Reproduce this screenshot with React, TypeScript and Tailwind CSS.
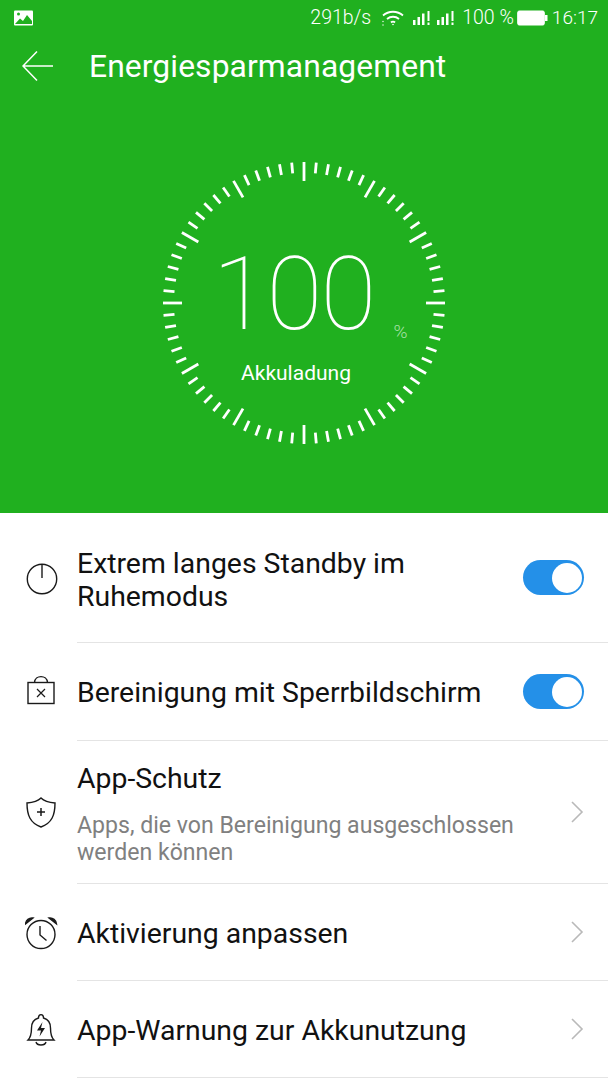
import React from "react";

const font = { fontFamily: "Roboto, sans-serif" };

function Gauge() {
  const ticks = Array.from({ length: 72 }, (_, i) => i);
  return (
    <svg width="310" height="310" viewBox="-155 -155 310 310" className="absolute inset-0">
      {ticks.map((i) => {
        const major = i % 6 === 0;
        return (
          <line
            key={i}
            x1="0"
            y1={-141}
            x2="0"
            y2={major ? -122 : -130}
            stroke="#fff"
            strokeWidth={2.8}
            transform={`rotate(${i * 5})`}
          />
        );
      })}
    </svg>
  );
}

function Signal() {
  return (
    <svg width="20" height="16" viewBox="0 0 20 16" fill="#fff">
      <rect x="0" y="10" width="2.500" height="5" />
      <rect x="4.500" y="7" width="2.500" height="8" />
      <rect x="9" y="3.500" width="2.500" height="11.500" />
      <rect x="14.500" y="1" width="2" height="10" />
      <rect x="14.500" y="12.500" width="2" height="2.500" />
    </svg>
  );
}

function Toggle() {
  return (
    <div className="w-[61px] h-[35px] rounded-full bg-[#2490e8] flex items-center justify-end pr-[2px] shrink-0">
      <div className="w-[30px] h-[30px] rounded-full bg-white" />
    </div>
  );
}

function Chevron() {
  return (
    <svg width="14" height="24" viewBox="0 0 14 24" fill="none" stroke="#b9b9b9" strokeWidth="1.6" className="shrink-0">
      <path d="M2 2 L12 12 L2 22" />
    </svg>
  );
}

const iconStroke = { fill: "none", stroke: "#1a1a1a", strokeWidth: 1.4 };

const PowerIcon = () => (
  <svg width="34" height="34" viewBox="0 0 34 34" {...iconStroke}>
    <circle cx="17" cy="18" r="14.7" />
    <path d="M17 3 V17" />
  </svg>
);
const BagIcon = () => (
  <svg width="34" height="34" viewBox="0 0 34 34" {...iconStroke}>
    <rect x="3" y="7.5" width="26" height="21" />
    <path d="M9.5 7.5 C10 -0.3 22 -0.3 22.5 7.5" />
    <path d="M12 14 L20 22 M20 14 L12 22" strokeWidth="1.2" />
  </svg>
);
const ShieldIcon = () => (
  <svg width="34" height="34" viewBox="0 0 34 34" {...iconStroke}>
    <path d="M16 2 C19 5 24 6.500 30 7 C30 19 27 27 16 31 C5 27 2 19 2 7 C8 6.500 13 5 16 2 Z" />
    <path d="M12 16 H20 M16 12 V20" strokeWidth="1.5" />
  </svg>
);
const ClockIcon = () => (
  <svg width="34" height="34" viewBox="0 0 34 34" {...iconStroke}>
    <circle cx="16" cy="18.500" r="14" />
    <path d="M15 10 V19 L21.500 24.500" />
    <path d="M0.500 8 C1 4 4 1.500 8 2 Z" fill="#1a1a1a" />
    <path d="M31.500 8 C31 4 28 1.500 24 2 Z" fill="#1a1a1a" />
  </svg>
);
const BellIcon = () => (
  <svg width="34" height="34" viewBox="0 0 34 34" {...iconStroke}>
    <path d="M3 27 C6 24 6.500 20 6.500 15 C6.500 9 10 6 13.500 5 C13.500 0.500 18.500 0.500 18.500 5 C22 6 25.500 9 25.500 15 C25.500 20 26 24 29 27 Z" />
    <path d="M11 29 C12 33 20 33 21 29" />
    <path d="M17.500 9 L12 17.500 H16 L14.500 23.500 L20 15 H16 Z" fill="#1a1a1a" stroke="none" />
  </svg>
);

function Row({
  icon,
  h,
  children,
  right,
}: {
  icon: React.ReactNode;
  h: string;
  children: React.ReactNode;
  right: React.ReactNode;
}) {
  return (
    <div className={`flex items-center ${h}`}>
      <div className="w-[77px] pl-[25px] shrink-0 flex">{icon}</div>
      <div className="flex-1 h-full border-b border-[#e4e4e4] flex items-center justify-between pr-[24px]">
        {children}
        {right}
      </div>
    </div>
  );
}

const label = "text-[28.400px] leading-[33px] text-[#111]";

export default function App() {
  return (
    <div style={font} className="w-[608px] h-[1080px] bg-white overflow-hidden">
      <div className="bg-[#20b01f] h-[513px] text-white">
        <div className="h-[36px] flex items-center pl-[14px] pr-[10px] text-[19.500px] font-light">
          <svg width="20" height="16" viewBox="0 0 20 16" className="shrink-0">
            <rect x="0" y="0.500" width="19" height="15" rx="1" fill="#fff" />
            <circle cx="4.500" cy="4" r="1.500" fill="#20b01f" />
            <path d="M1 14 L6 8.500 L9 11 L13 5 L18 11 V14 Z" fill="#20b01f" />
          </svg>
          <span className="ml-auto">291b/s</span>
          <svg width="24" height="18" viewBox="0 0 24 18" fill="none" stroke="#fff" strokeWidth="1.800" className="ml-[10px]">
            <path d="M2 6.500 C7.500 1.500 16.500 1.500 22 6.500" />
            <path d="M6 10 C9.500 7 14.500 7 18 10" />
            <path d="M10 13.500 C11 12.500 13 12.500 14 13.500" />
            <circle cx="12" cy="15.500" r="0.800" fill="#fff" stroke="none" />
            <circle cx="2" cy="16" r="0.700" fill="#fff" stroke="none" />
            <circle cx="2" cy="12.500" r="0.700" fill="#fff" stroke="none" />
          </svg>
          <div className="ml-[8px] flex gap-[4px]">
            <Signal />
            <Signal />
          </div>
          <span className="ml-[5px]">100 %</span>
          <svg width="31" height="16" viewBox="0 0 31 16" className="ml-[3px]">
            <rect x="0.700" y="1" width="26.600" height="14" rx="1.500" fill="#fff" stroke="#fff" strokeWidth="1" />
            <rect x="28" y="5" width="2.500" height="6" fill="#fff" />
          </svg>
          <span className="ml-[4px] text-[19px]">16:17</span>
        </div>
        <div className="h-[60px] flex items-center pl-[22px]">
          <svg width="32" height="32" viewBox="0 0 32 32" fill="none" stroke="#fff" strokeWidth="1.500" className="shrink-0">
            <path d="M1 16 H31 M15 1.500 L1 16 L15 30.500" />
          </svg>
          <span className="ml-[35px] pt-[2px] text-[31.800px] leading-none tracking-[0.1px]">Energiesparmanagement</span>
        </div>
        <div className="flex justify-center mt-[52px]">
          <div className="relative w-[310px] h-[310px] flex flex-col items-center">
            <Gauge />
            <div className="mt-[95px] flex items-end ml-[-21px] relative">
              <span className="text-[102px] leading-[102px] font-thin tracking-[-1.800px]">100</span>
              <span className="absolute left-[100%] ml-[19px] bottom-[4px] text-[19px] leading-none font-light text-[#a5e0a5]">%</span>
            </div>
            <span className="mt-[15px] ml-[-16px] text-[21px] leading-[26px] relative">Akkuladung</span>
          </div>
        </div>
      </div>

      <Row icon={<PowerIcon />} h="h-[130px]" right={<Toggle />}>
        <div className={`${label} pt-[5px]`}>
          Extrem langes Standby im
          <br />
          Ruhemodus
        </div>
      </Row>
      <Row icon={<BagIcon />} h="h-[98px]" right={<Toggle />}>
        <div className={`${label} pt-[2px]`}>Bereinigung mit Sperrbildschirm</div>
      </Row>
      <Row icon={<ShieldIcon />} h="h-[143px]" right={<Chevron />}>
        <div className="flex flex-col pt-[4px]">
          <div className={label}>App-Schutz</div>
          <div className="mt-[17px] text-[23.100px] leading-[27px] text-[#808080]">
            Apps, die von Bereinigung ausgeschlossen
            <br />
            werden können
          </div>
        </div>
      </Row>
      <Row icon={<ClockIcon />} h="h-[97px]" right={<Chevron />}>
        <div className={`${label} pt-[2px]`}>Aktivierung anpassen</div>
      </Row>
      <Row icon={<BellIcon />} h="h-[97px]" right={<Chevron />}>
        <div className={`${label} pt-[2px]`}>App-Warnung zur Akkunutzung</div>
      </Row>
    </div>
  );
}
